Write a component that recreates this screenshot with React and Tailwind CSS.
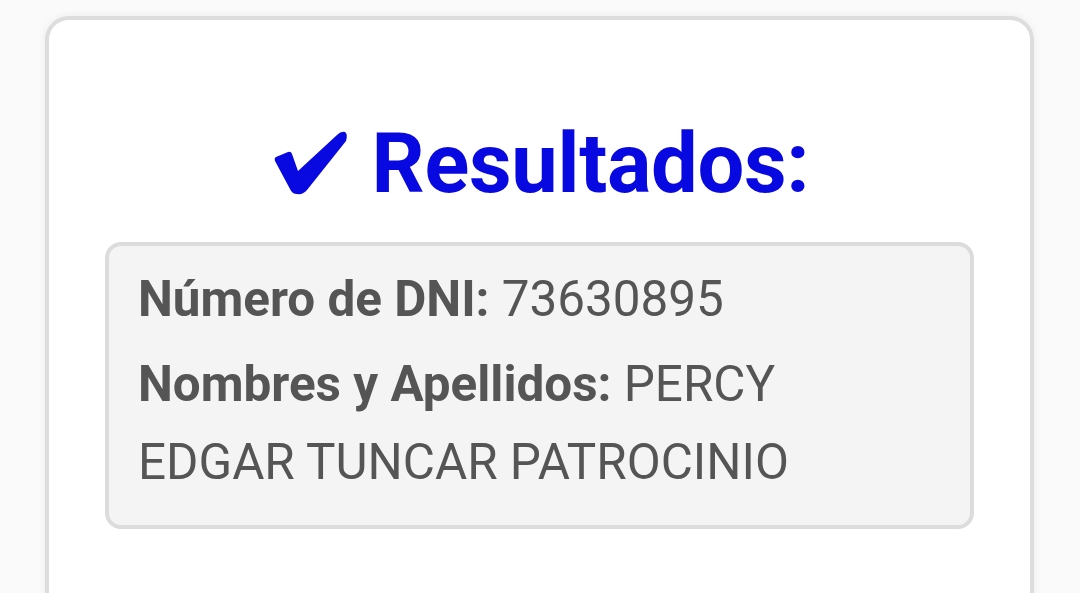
import React from "react";

function HeavyCheck() {
  return (
    <svg width="90" height="90" viewBox="0 0 90 90" className="shrink-0">
      <path
        d="M10 38 L22 33 Q25 32 26 35 L32 52 L71 16 Q75 12 79 13 Q82 15 80 22 L41 71 Q37 76 31 75 Q26 75 24 70 L9 42 Q8 39 10 38 Z"
        fill="#0808e0"
      />
    </svg>
  );
}

export default function App() {
  return (
    <div className="w-[1080px] h-[593px] overflow-hidden bg-[#fafafa] pt-[16px] pl-[45px]" style={{ fontFamily: "Roboto, 'Noto Sans', sans-serif" }}>
      <div className="w-[989px] h-[620px] bg-white border-[4px] border-[#dddddd] rounded-[24px] shadow-[0_0_8px_rgba(0,0,0,0.06)] px-[56px] pt-[96px]">
        <h1 className="flex items-center justify-center gap-[16px] text-[#0808e0] font-bold text-[83px] leading-[96px] tracking-[-0.3px] pr-[4px]">
          <HeavyCheck />
          <span>Resultados:</span>
        </h1>
        <div className="mt-[30px] bg-[#f4f4f4] border-[4px] border-[#dcdcdc] rounded-[16px] pl-[29px] pr-[30px] pt-[14px] pb-[24px] text-[#555555] text-[49.4px] leading-[78px]">
          <p className="mb-[7px]">
            <span className="font-bold">Número de DNI:</span> 73630895
          </p>
          <p>
            <span className="font-bold">Nombres y Apellidos:</span> PERCY
            <br />
            EDGAR TUNCAR PATROCINIO
          </p>
        </div>
      </div>
    </div>
  );
}
